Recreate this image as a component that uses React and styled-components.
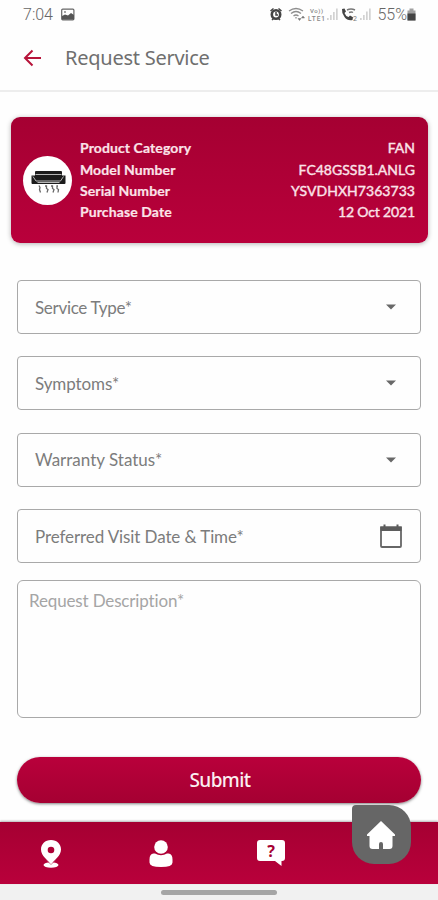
import styled, { createGlobalStyle } from 'styled-components';

const GlobalStyle = createGlobalStyle`
  * {
    box-sizing: border-box;
  }

  body {
    margin: 0;
    background: #fefefe;
  }
`;

const StyledScreen = styled.div`
  display: flex;
  flex-direction: column;
  height: 900px;
  overflow: hidden;
  background: #fefefe;
  color: #7c7c7c;
  font-family: Lato, sans-serif;
  font-variant-ligatures: none;
`;

const StyledStatusBar = styled.div`
  display: flex;
  justify-content: space-between;
  align-items: center;
  height: 28px;
  padding: 0 22px 0 23px;
  color: #666;
  font-family: Roboto, sans-serif;
  font-size: 16px;
`;

const StyledStatusGroup = styled.div`
  display: flex;
  align-items: center;
  gap: ${({ $gap }) => $gap}px;
`;

const StyledStatusText = styled.span`
  font-weight: 300;
  letter-spacing: ${({ $spacing }) => $spacing || 0}px;
`;

const StyledHeader = styled.header`
  display: flex;
  align-items: center;
  gap: 23px;
  height: 64px;
  padding: 0 23px 2px;
  border-bottom: 2px solid #ededed;
`;

const StyledTitle = styled.h1`
  margin: 0;
  color: #6f6f6f;
  font-family: 'Noto Sans', sans-serif;
  font-size: 20px;
  font-weight: 400;
  letter-spacing: -0.25px;
  line-height: 28px;
`;

const StyledCard = styled.section`
  display: flex;
  align-items: center;
  gap: 8px;
  height: 126px;
  margin: 25px 10px 0 11px;
  padding: 0 13px 0 12px;
  border-radius: 9px;
  background: linear-gradient(#a50032, #b9003b);
  box-shadow: 0 1px 5px rgba(0, 0, 0, 0.3);
`;

const StyledAvatar = styled.div`
  display: flex;
  flex-shrink: 0;
  width: 49px;
  height: 49px;
  border-radius: 50%;
  background: #fff;
`;

const StyledDetails = styled.dl`
  flex: 1;
  margin: 0;
`;

const StyledDetail = styled.div`
  display: flex;
  justify-content: space-between;
  color: #fbe3e9;
  font-size: 14px;
  line-height: 21.33px;
`;

const StyledTerm = styled.dt`
  font-weight: 700;
  letter-spacing: 0.1px;
  -webkit-text-stroke: 0.2px;
`;

const StyledValue = styled.dd`
  margin: 0;
  letter-spacing: ${({ $spacing }) => $spacing}px;
  -webkit-text-stroke: 0.4px;
`;

const StyledForm = styled.form`
  display: flex;
  flex-direction: column;
  margin: 37px 17px 0;
`;

const StyledField = styled.div`
  display: flex;
  justify-content: space-between;
  align-items: center;
  height: 54px;
  margin-bottom: ${({ $last }) => ($last ? 16.8 : 22.4)}px;
  padding: 0 17px;
  border: 1px solid #a9a9a9;
  border-radius: 4px;
  font-size: 17px;
`;

const StyledLabel = styled.span`
  letter-spacing: ${({ $spacing }) => $spacing || 0}px;
`;

const StyledTextarea = styled.div`
  height: 138px;
  padding: 10px 11px;
  border: 1px solid #a9a9a9;
  border-radius: 6px;
  color: #a5a5a5;
  font-size: 17px;
  letter-spacing: -0.15px;
  line-height: 20px;
`;

const StyledSubmit = styled.button`
  height: 46px;
  margin: 39px 0 0;
  padding: 0 0 0 2px;
  border: 0;
  border-radius: 23px;
  background: linear-gradient(#b9003b, #a50032);
  box-shadow: 0 1px 3px rgba(0, 0, 0, 0.5);
  color: #fbeef1;
  font-family: 'Noto Sans', sans-serif;
  font-size: 19px;
  font-weight: 500;
  letter-spacing: -0.6px;
`;

const StyledNav = styled.nav`
  position: relative;
  display: grid;
  grid-template-columns: 102px 117px 103px 1fr;
  align-items: center;
  height: 62px;
  margin-top: 19.200px;
  background: linear-gradient(#a50032, #b9003b);
  box-shadow: 0 -1px 2px rgba(0, 0, 0, 0.3);
`;

const StyledNavItem = styled.div`
  display: flex;
  justify-content: center;
`;

const StyledHome = styled.div`
  position: absolute;
  top: -17px;
  right: 27px;
  display: flex;
  justify-content: center;
  align-items: center;
  width: 59px;
  height: 59px;
  padding-right: 1px;
  border-radius: 4px 22px 22px 22px;
  background: #666;
`;

const StyledGestureBar = styled.div`
  display: flex;
  flex: 1;
  justify-content: center;
  padding-top: 6px;
  background: #f1f1f1;
`;

const StyledHandle = styled.div`
  width: 116px;
  height: 5px;
  border-radius: 3px;
  background: #a5a5a5;
`;

const product = [
  { term: 'Product Category', value: 'FAN', spacing: 0 },
  { term: 'Model Number', value: 'FC48GSSB1.ANLG', spacing: 0 },
  { term: 'Serial Number', value: 'YSVDHXH7363733', spacing: 0.05 },
  { term: 'Purchase Date', value: '12 Oct 2021', spacing: -0.15 }
];

const selects = [
  { label: 'Service Type*', spacing: -0.3 },
  { label: 'Symptoms*', spacing: -0.1 },
  { label: 'Warranty Status*', spacing: 0 }
];

const PictureIcon = () => (
  <svg width="14" height="13" viewBox="0 0 14 13">
    <rect x="0.7" y="1.2" width="12.2" height="10.6" rx="1" fill="none" stroke="#666" strokeWidth="1.2" />
    <path d="M1 11V8l3-1.500 3 1L10 5l3 2v4.500H1z" fill="#555" />
    <circle cx="4" cy="4" r="0.9" fill="#777" />
  </svg>
);

const StatusIcons = () => (
  <svg width="108" height="18" viewBox="0 0 108 18">
    <circle cx="7" cy="9.5" r="4.2" fill="none" stroke="#444" strokeWidth="2.6" />
    <path d="M1.500 6l3-2.500M12.500 6l-3-2.500M3 15l1.500-1.500M11 15l-1.500-1.500M7 7v3h2" fill="none" stroke="#444" strokeWidth="1.5" />
    <g fill="none" stroke="#8d8d8d" strokeWidth="1.3">
      <path d="M20 6q7-5 14 0M22 8.500q5-4 10 0M24.500 11q2.500-2 5 0M27 12v1.500" />
    </g>
    <path d="M29 13.500l1.500 2 1.500-2zM32.500 13l1.500-2 1.500 2z" fill="#777" stroke="#777" strokeWidth="0.5" />
    <g fill="#888" fontFamily="Roboto, sans-serif" fontWeight="500">
      <text x="41" y="7.5" fontSize="6" textLength="13">Vo))</text>
      <text x="39" y="15.5" fontSize="6.5" textLength="17">LTE1</text>
    </g>
    <g fill="#d2d2d2">
      <path d="M58 13h1.700v2H58zM61 10h1.700v5H61zM64 7h1.700v8H64zM67 3.500h1.700v11.500H67z" />
      <path d="M91 13h1.700v2H91zM94 10h1.700v5H94zM97 6.500h1.700v8.500H97zM100 3.500h1.700v11.500H100z" />
    </g>
    <path d="M73 4l2.500-.5 1.500 3-1.500 1.500q1 3 4 4l1.500-1.500 3 1.800-.5 2.700q-5 1-8-3T73 4z" fill="#444" />
    <path d="M78 5q4-2 8 0M80 7.500q2.500-1 4 0" fill="none" stroke="#777" strokeWidth="1.5" />
    <text x="84" y="15.500" fontSize="7" fill="#777" fontFamily="Roboto, sans-serif">2</text>
  </svg>
);

const BatteryIcon = () => (
  <svg width="9" height="13" viewBox="0 0 9 13">
    <path d="M0.500 2.500h2V0.500h4v2h2V12.500h-8z" fill="#a0a0a0" />
    <path d="M0.500 5.500h8v7h-8z" fill="#444" />
  </svg>
);

const BackIcon = () => (
  <svg width="19" height="18" viewBox="0 0 19 18">
    <path d="M9.500 1.500L2 9l7.500 7.500M2 9h16" fill="none" stroke="#b7143a" strokeWidth="2" />
  </svg>
);

const AirConditionerIcon = () => (
  <svg width="49" height="49" viewBox="0 0 49 49">
    <path d="M13 15h25q1 0 1 1v3.500h3.500V27q0 1-1 1h-32q-1 0-1-1v-7.500H12V16q0-1 1-1z" fill="#1c1c1c" />
    <path d="M12.500 18.500h26M10 20.500l3 4.500h24.500l3-4.500M14.500 26.500h22" fill="none" stroke="#c8c8c8" strokeWidth="0.9" />
    <path d="M16 29.500l1 2-.5 2 1 3M22 30h1.500v2.500l1.500 1-1 3M28 30h1.500v2.500l1.500 1-1 3M35 30h-1v2.500l1.500 1-.500 3" fill="none" stroke="#6a6a6a" strokeWidth="1.3" />
  </svg>
);

const CaretIcon = () => (
  <svg width="24" height="24" viewBox="0 0 24 24">
    <path d="M7 9.500h10l-5 5z" fill="#686868" />
  </svg>
);

const CalendarIcon = () => (
  <svg width="24" height="26" viewBox="0 0 24 26">
    <path d="M2 4.500h20V23q0 1-1 1H3q-1 0-1-1z" fill="none" stroke="#666" strokeWidth="1.800" />
    <path d="M1.500 3.500h21V8h-21zM4.500 1.500h2v3h-2zM17.500 1.500h2v3h-2z" fill="#5c5c5c" />
  </svg>
);

const PinIcon = () => (
  <svg width="22" height="29" viewBox="0 0 22 29">
    <ellipse cx="11" cy="26" rx="7.500" ry="2.800" fill="#fff" />
    <path d="M11 1C5 1 1 5.200 1 10.500 1 17 8 21 11 25.500 14 21 21 17 21 10.500 21 5.200 17 1 11 1z" fill="#fff" />
    <path d="M6.500 21.500L11 25.500l4.500-4" fill="none" stroke="#c03a63" strokeWidth="0.600" />
    <circle cx="11" cy="11" r="3.300" fill="#ad0035" />
  </svg>
);

const UserIcon = () => (
  <svg width="24" height="29" viewBox="0 0 24 29">
    <circle cx="12" cy="8" r="6.800" fill="#fff" />
    <path d="M4.500 14.500h1.500q6 3.500 12 0h1.500q4 .5 4 6v3q0 4.500-11.500 4.500T.500 23.500v-3q0-5.500 4-6z" fill="#fff" />
  </svg>
);

const HelpIcon = () => (
  <svg width="30" height="28" viewBox="0 0 30 28">
    <path d="M4 1h22q3 0 3 3v15q0 3-3 3h-.500V27L19 22H4q-3 0-3-3V4q0-3 3-3z" fill="#fff" />
    <text x="15" y="17.500" textAnchor="middle" fontFamily="Noto Sans, sans-serif" fontSize="16" fontWeight="700" fill="#a50032">?</text>
  </svg>
);

const HomeIcon = () => (
  <svg width="30" height="30" viewBox="0 0 30 30">
    <path d="M15 1L1 14.500v1.500h2.500V26q0 3 3 3H13v-5q0-2 2-2t2 2v5h6.500q3 0 3-3V16H29v-1.500z" fill="#fff" />
  </svg>
);

const App = () => {
  return (
    <>
      <GlobalStyle />
      <StyledScreen>
        <StyledStatusBar>
          <StyledStatusGroup $gap={8}>
            <StyledStatusText>7:04</StyledStatusText>
            <PictureIcon />
          </StyledStatusGroup>
          <StyledStatusGroup $gap={0}>
            <StatusIcons />
            <StyledStatusText $spacing={0}>55%</StyledStatusText>
            <BatteryIcon />
          </StyledStatusGroup>
        </StyledStatusBar>
        <StyledHeader>
          <BackIcon />
          <StyledTitle>Request Service</StyledTitle>
        </StyledHeader>
        <StyledCard>
          <StyledAvatar>
            <AirConditionerIcon />
          </StyledAvatar>
          <StyledDetails>
            {product.map(({ term, value, spacing }) => (
              <StyledDetail key={term}>
                <StyledTerm>{term}</StyledTerm>
                <StyledValue $spacing={spacing}>{value}</StyledValue>
              </StyledDetail>
            ))}
          </StyledDetails>
        </StyledCard>
        <StyledForm>
          {selects.map(({ label, spacing }) => (
            <StyledField key={label}>
              <StyledLabel $spacing={spacing}>{label}</StyledLabel>
              <CaretIcon />
            </StyledField>
          ))}
          <StyledField $last>
            <StyledLabel $spacing={-0.1}>Preferred Visit Date &amp; Time*</StyledLabel>
            <CalendarIcon />
          </StyledField>
          <StyledTextarea>Request Description*</StyledTextarea>
          <StyledSubmit type="button">Submit</StyledSubmit>
        </StyledForm>
        <StyledNav>
          <StyledNavItem>
            <PinIcon />
          </StyledNavItem>
          <StyledNavItem>
            <UserIcon />
          </StyledNavItem>
          <StyledNavItem>
            <HelpIcon />
          </StyledNavItem>
          <StyledHome>
            <HomeIcon />
          </StyledHome>
        </StyledNav>
        <StyledGestureBar>
          <StyledHandle />
        </StyledGestureBar>
      </StyledScreen>
    </>
  );
};

export default App;
